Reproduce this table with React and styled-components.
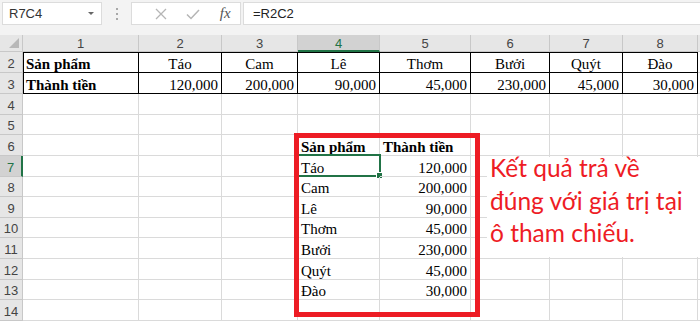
import React from "react";
import styled, { createGlobalStyle } from "styled-components";

const COLS = [116, 83, 76, 82, 91, 79, 73, 75];
const ROWS = [21, 21, 21, 20, 21, 21, 20, 21, 20, 21, 21, 20, 21];
const GREEN = "#217346";
const GRID = "#dadada";

const GlobalStyle = createGlobalStyle`
  html, body {
    margin: 0;
    padding: 0;
    background: #ffffff;
    overflow: hidden;
  }
`;

const Page = styled.div`
  width: 700px;
  height: 321px;
  overflow: hidden;
  background: #f3f3f3;
  font-family: "Liberation Sans", Arial, sans-serif;
`;

const Toolbar = styled.div`
  display: flex;
  align-items: center;
  height: 35px;
  padding: 2px 0 10px 2px;
  box-sizing: border-box;
`;

const Box = styled.div`
  height: 23px;
  background: #ffffff;
  border: 1px solid #dcdcdc;
  box-sizing: border-box;
  display: flex;
  align-items: center;
`;

const NameBox = styled(Box)`
  width: 100px;
  padding: 0 6px;
  justify-content: space-between;
  font-size: 13px;
  color: #333;
`;

const Caret = styled.span`
  width: 0;
  height: 0;
  border-left: 3px solid transparent;
  border-right: 3px solid transparent;
  border-top: 3px solid #666;
  margin-right: 1px;
`;

const Dots = styled.div`
  width: 29px;
  display: flex;
  justify-content: center;
`;

const FxBox = styled(Box)`
  width: 110px;
  padding: 0 0 0 13px;
`;

const FxIcon = styled.span`
  width: 37px;
  display: flex;
  justify-content: center;
`;

const FxText = styled.span`
  font-family: "Liberation Serif", serif;
  font-style: italic;
  font-size: 15px;
  color: #555;
  margin-left: 2px;
`;

const FormulaBox = styled(Box)`
  flex: 1;
  margin-left: 2px;
  border-right: none;
  padding-left: 9px;
  font-size: 13px;
  color: #222;
`;

const Sheet = styled.div`
  position: relative;
  display: grid;
  grid-template-columns: 23px ${COLS.map((w) => `${w}px`).join(" ")} 1fr;
  grid-template-rows: 17px ${ROWS.map((h) => `${h}px`).join(" ")};
  background: #ffffff;
`;

const HeadCell = styled.div`
  box-sizing: border-box;
  display: flex;
  align-items: center;
  justify-content: center;
  background: ${(p) => (p.$selected ? "#d2d2d2" : "#e6e6e6")};
  color: ${(p) => (p.$selected ? GREEN : "#444")};
  font-family: "Liberation Sans", Arial, sans-serif;
  font-size: 13px;
  border-right: 1px solid #c8c8c8;
  border-bottom: 1px solid #c8c8c8;
`;

const ColHead = styled(HeadCell)`
  border-bottom: ${(p) => (p.$selected ? `2px solid ${GREEN}` : "1px solid #c8c8c8")};
  padding-top: 1px;
`;

const RowHead = styled(HeadCell)`
  border-right: ${(p) => (p.$selected ? `2px solid ${GREEN}` : "1px solid #c8c8c8")};
  padding-top: 2px;
`;

const Corner = styled(HeadCell)`
  position: relative;
`;

const CornerTri = styled.span`
  position: absolute;
  right: 3px;
  bottom: 3px;
  width: 0;
  height: 0;
  border-left: 10px solid transparent;
  border-bottom: 10px solid #b8b8b8;
`;

const Cell = styled.div`
  position: relative;
  box-sizing: border-box;
  display: flex;
  align-items: flex-end;
  justify-content: ${(p) =>
    p.$align === "right" ? "flex-end" : p.$align === "center" ? "center" : "flex-start"};
  padding: 0 3px 0 3px;
  font-family: "Liberation Serif", "Times New Roman", serif;
  font-size: 15px;
  line-height: 16px;
  font-weight: ${(p) => (p.$bold ? 700 : 400)};
  color: #000;
  white-space: nowrap;
  border-right: 1px solid ${(p) => (p.$boxed ? "#000" : GRID)};
  border-bottom: 1px solid ${(p) => (p.$boxed ? "#000" : GRID)};
  box-shadow: ${(p) =>
    [p.$top && "inset 0 1px 0 #000", p.$left && "inset 1px 0 0 #000"]
      .filter(Boolean)
      .join(", ") || "none"};
`;

const Selection = styled.span`
  position: absolute;
  left: -1px;
  top: -2px;
  right: -2px;
  bottom: -1px;
  border: 2px solid ${GREEN};
  pointer-events: none;
`;

const FillHandle = styled.span`
  position: absolute;
  right: -4px;
  bottom: -4px;
  width: 5px;
  height: 5px;
  background: ${GREEN};
  border: 1px solid #fff;
`;

const RedFrame = styled.div`
  position: absolute;
  left: 294px;
  top: 98px;
  width: 186px;
  height: 184px;
  box-sizing: border-box;
  border: 5px solid #ed1c24;
  pointer-events: none;
`;

const Note = styled.div`
  position: absolute;
  left: 487px;
  top: 122px;
  width: 213px;
  height: 100px;
  box-sizing: border-box;
  padding: 0 0 0 3px;
  background: #ffffff;
  color: #ee1c25;
  font-family: Lato, "Open Sans", sans-serif;
  font-size: 24.5px;
  line-height: 32.5px;
`;

const NoteText = styled.div`
  margin-top: -5px;
  white-space: nowrap;
`;

const row2 = ["Sản phẩm", "Táo", "Cam", "Lê", "Thơm", "Bưởi", "Quýt", "Đào"];
const row3 = ["Thành tiền", "120,000", "200,000", "90,000", "45,000", "230,000", "45,000", "30,000"];
const list = [
  ["Táo", "120,000"],
  ["Cam", "200,000"],
  ["Lê", "90,000"],
  ["Thơm", "45,000"],
  ["Bưởi", "230,000"],
  ["Quýt", "45,000"],
  ["Đào", "30,000"],
];

const cellFor = (r, c) => {
  if (r === 2 && c <= 8) {
    return { text: row2[c - 1], bold: c === 1, align: c === 1 ? "left" : "center" };
  }
  if (r === 3 && c <= 8) {
    return { text: row3[c - 1], bold: c === 1, align: c === 1 ? "left" : "right" };
  }
  if (r === 6 && c === 4) return { text: "Sản phẩm", bold: true };
  if (r === 6 && c === 5) return { text: "Thành tiền", bold: true };
  if (r >= 7 && r <= 13 && c === 4) return { text: list[r - 7][0] };
  if (r >= 7 && r <= 13 && c === 5) return { text: list[r - 7][1], align: "right" };
  return { text: "" };
};

const XIcon = () => (
  <svg width="14" height="14" viewBox="0 0 14 14">
    <path d="M2 2 L12 12 M12 2 L2 12" stroke="#b5b5b5" strokeWidth="1.3" fill="none" />
  </svg>
);

const CheckIcon = () => (
  <svg width="16" height="14" viewBox="0 0 16 14">
    <path d="M2 7.5 L6 11.5 L14 3" stroke="#b5b5b5" strokeWidth="1.5" fill="none" />
  </svg>
);

const DotsIcon = () => (
  <svg width="4" height="14" viewBox="0 0 4 14">
    <rect x="1" y="1" width="2" height="2" fill="#a8a8a8" />
    <rect x="1" y="6" width="2" height="2" fill="#a8a8a8" />
    <rect x="1" y="11" width="2" height="2" fill="#a8a8a8" />
  </svg>
);

export default function App() {
  const sheetRows = [];
  for (let r = 2; r <= 14; r++) {
    sheetRows.push(
      <RowHead key={`h${r}`} $selected={r === 7}>
        {r}
      </RowHead>
    );
    for (let c = 1; c <= 9; c++) {
      const cell = cellFor(r, c);
      const boxed = (r === 2 || r === 3) && c <= 8;
      const active = r === 7 && c === 4;
      sheetRows.push(
        <Cell
          key={`${r}-${c}`}
          $align={cell.align}
          $bold={cell.bold}
          $boxed={boxed}
          $top={boxed && r === 2}
          $left={boxed && c === 1}
        >
          {cell.text}
          {active && (
            <Selection>
              <FillHandle />
            </Selection>
          )}
        </Cell>
      );
    }
  }

  return (
    <Page>
      <GlobalStyle />
      <Toolbar>
        <NameBox>
          R7C4
          <Caret />
        </NameBox>
        <Dots>
          <DotsIcon />
        </Dots>
        <FxBox>
          <FxIcon>
            <XIcon />
          </FxIcon>
          <FxIcon>
            <CheckIcon />
          </FxIcon>
          <FxIcon>
            <FxText>fx</FxText>
          </FxIcon>
        </FxBox>
        <FormulaBox>=R2C2</FormulaBox>
      </Toolbar>

      <Sheet>
        <Corner>
          <CornerTri />
        </Corner>
        {COLS.map((_, i) => (
          <ColHead key={`c${i}`} $selected={i === 3}>
            {i + 1}
          </ColHead>
        ))}
        <ColHead />
        {sheetRows}
        <RedFrame />
        <Note>
          <NoteText>
            Kết quả trả về
            <br />
            đúng với giá trị tại
            <br />
            ô tham chiếu.
          </NoteText>
        </Note>
      </Sheet>
    </Page>
  );
}
